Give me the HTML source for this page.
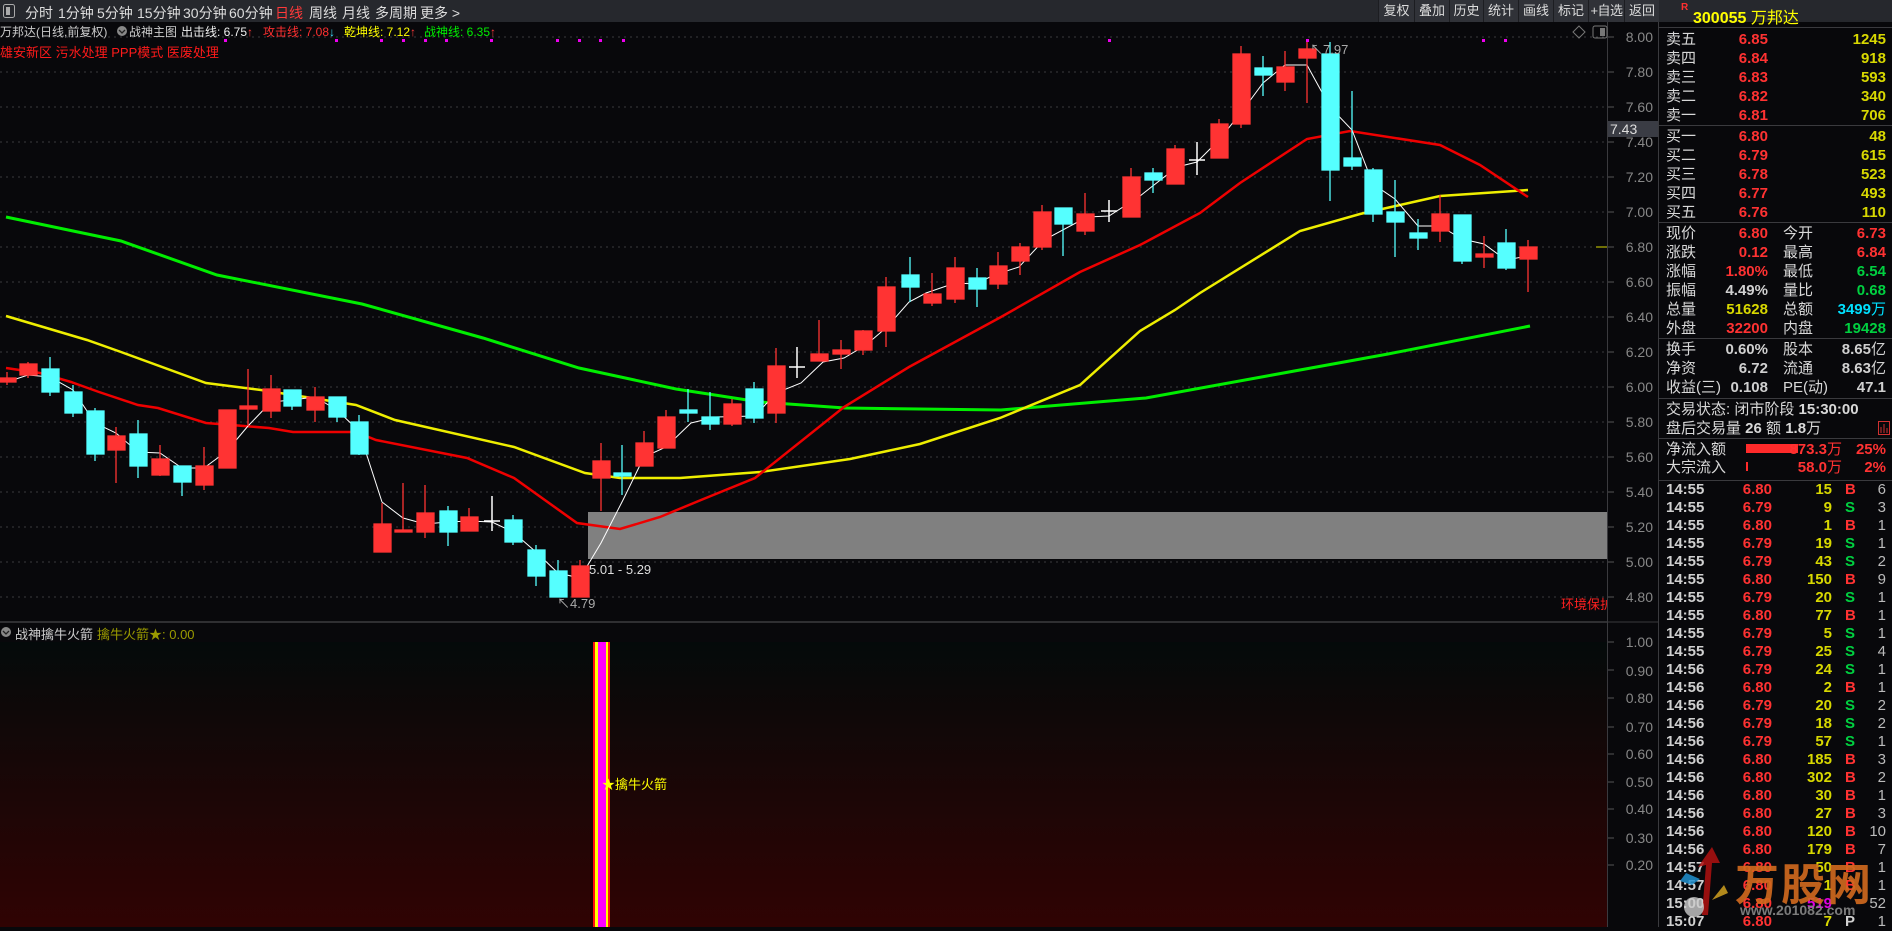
<!DOCTYPE html>
<html><head><meta charset="utf-8"><style>
*{margin:0;padding:0;box-sizing:border-box}
body{width:1892px;height:927px;background:#08080b;overflow:hidden;position:relative;font-family:"Liberation Sans","Noto Sans CJK SC",sans-serif;color:#ccc}
.a{position:absolute;white-space:nowrap}
#tb{position:absolute;left:0;top:0;width:1892px;height:22px;background:#26282d}
#tb span.t{position:absolute;top:3px;font-size:14px;color:#ddd}
.btn{position:absolute;top:0;height:22px;background:#303238;color:#ddd;font-size:13px;line-height:22px;text-align:center;border-left:1px solid #1c1d21;overflow:hidden}
.r{position:absolute;left:1659px;width:233px;height:19px;font-size:15px;line-height:19px}
.r span{position:absolute;top:0}
.l{left:7px;color:#d8d8d8}
.v{right:124px;font-weight:bold}
.l2{left:124px;color:#d8d8d8}
.v2{right:6px;font-weight:bold}
.tk{position:absolute;left:1659px;width:233px;height:18px;font-size:15px;line-height:18px;font-weight:bold}
.tk span{position:absolute;top:0}
.ti{left:7px;color:#d0d0d0}.pr{right:120px;color:#ff3232}.vo{right:60px;color:#d8d800}.bs{left:186px}.n{right:6px;color:#bbb;font-weight:normal}
.R{color:#ff3232}.Y{color:#d8d800}.G{color:#00d040}.C{color:#00e0ff}.W{color:#d0d0d0}
.hl{position:absolute;left:1659px;width:233px;height:1px;background:#3a3a3e}
.ax{position:absolute;right:239px;font-size:14px;color:#888;text-align:right}
.h2{position:absolute;top:24px;font-size:12px;line-height:16px;white-space:nowrap}
</style></head><body>

<svg class="a" style="left:0;top:0" width="1892" height="927" xmlns="http://www.w3.org/2000/svg">
<defs><linearGradient id="g" x1="0" y1="0" x2="0" y2="1"><stop offset="0" stop-color="#040a0a"/><stop offset="1" stop-color="#300303"/></linearGradient></defs>
<rect x="0" y="642" width="1607" height="285" fill="url(#g)"/>
<line x1="0" y1="622" x2="1607" y2="622" stroke="#3c3c40" stroke-width="1.5"/>
<line x1="1607.5" y1="22" x2="1607.5" y2="927" stroke="#3a3a3e"/>
<line x1="1658.5" y1="0" x2="1658.5" y2="927" stroke="#3a3a3e"/>
<line x1="1608" y1="622" x2="1658" y2="622" stroke="#3a3a3e"/>
<g stroke="#3a3a3e" stroke-dasharray="2,4">
<line x1="0" y1="37" x2="1607" y2="37"/><line x1="0" y1="72" x2="1607" y2="72"/><line x1="0" y1="107" x2="1607" y2="107"/><line x1="0" y1="142" x2="1607" y2="142"/><line x1="0" y1="177" x2="1607" y2="177"/><line x1="0" y1="212" x2="1607" y2="212"/><line x1="0" y1="247" x2="1607" y2="247"/><line x1="0" y1="282" x2="1607" y2="282"/><line x1="0" y1="317" x2="1607" y2="317"/><line x1="0" y1="352" x2="1607" y2="352"/><line x1="0" y1="387" x2="1607" y2="387"/><line x1="0" y1="422" x2="1607" y2="422"/><line x1="0" y1="457" x2="1607" y2="457"/><line x1="0" y1="492" x2="1607" y2="492"/><line x1="0" y1="527" x2="1607" y2="527"/><line x1="0" y1="562" x2="1607" y2="562"/><line x1="0" y1="597" x2="1607" y2="597"/>
</g>
<g stroke="#555">
<line x1="1608" y1="37" x2="1614" y2="37"/><line x1="1608" y1="72" x2="1614" y2="72"/><line x1="1608" y1="107" x2="1614" y2="107"/><line x1="1608" y1="142" x2="1614" y2="142"/><line x1="1608" y1="177" x2="1614" y2="177"/><line x1="1608" y1="212" x2="1614" y2="212"/><line x1="1608" y1="247" x2="1614" y2="247"/><line x1="1608" y1="282" x2="1614" y2="282"/><line x1="1608" y1="317" x2="1614" y2="317"/><line x1="1608" y1="352" x2="1614" y2="352"/><line x1="1608" y1="387" x2="1614" y2="387"/><line x1="1608" y1="422" x2="1614" y2="422"/><line x1="1608" y1="457" x2="1614" y2="457"/><line x1="1608" y1="492" x2="1614" y2="492"/><line x1="1608" y1="527" x2="1614" y2="527"/><line x1="1608" y1="562" x2="1614" y2="562"/><line x1="1608" y1="597" x2="1614" y2="597"/>
<line x1="1608" y1="642" x2="1614" y2="642"/><line x1="1608" y1="670" x2="1614" y2="670"/><line x1="1608" y1="698" x2="1614" y2="698"/><line x1="1608" y1="727" x2="1614" y2="727"/><line x1="1608" y1="754" x2="1614" y2="754"/><line x1="1608" y1="782" x2="1614" y2="782"/><line x1="1608" y1="809" x2="1614" y2="809"/><line x1="1608" y1="838" x2="1614" y2="838"/><line x1="1608" y1="865" x2="1614" y2="865"/>
</g>
<line x1="1596" y1="247" x2="1607" y2="247" stroke="#d8d800"/>
<rect x="588" y="512" width="1019" height="47" fill="#808080"/>
<polyline fill="none" stroke="#00ee00" stroke-width="3" points="6,217 121,241 217,275 362,304 483,338 579,368 676,389 760,402 845,408 1001,410 1146,398 1267,376 1388,354 1530,326"/>
<polyline fill="none" stroke="#eeee00" stroke-width="2.5" points="6,316 87,340 121,352 206,383 261,390 356,405 395,420 514,447 585,473 620,478 680,478 760,472 850,459 920,444 1000,418 1080,385 1140,331 1175,310 1200,293 1300,231 1360,214 1440,196 1528,190"/>
<polyline fill="none" stroke="#ee0000" stroke-width="2.5" points="6,368 40,373 71,382 99,392 138,405 158,408 206,423 269,428 293,432 356,432 376,440 467,458 514,478 577,523 620,529 660,517 701,500 755,478 844,407 909,367 1001,317 1080,272 1140,245 1200,213 1240,183 1307,139 1350,131 1440,145 1480,165 1528,197"/>
<polyline fill="none" stroke="#ffffff" stroke-width="1" points="7,382 28,375 50,377 73,390 95,423 116,433 138,452 160,453 182,468 204,468 227,451 248,426 271,402 292,400 315,397 337,410 359,431 382,502 403,518 425,524 448,522 469,521 492,522 513,532 536,552 558,573 580,578 601,543 623,500 644,457 666,447 691,423 716,417 755,416 776,393 801,383 823,362 844,358 866,345 887,327 909,302 926,293 955,283 976,284 994,275 1019,267 1044,240 1087,217 1109,216 1140,196 1177,167 1197,162 1219,140 1243,110 1263,83 1285,65 1307,65 1330,107 1352,130 1373,184 1395,199 1418,226 1440,226 1462,239 1484,244 1506,260 1528,256"/>
<g stroke-width="1.3">
<g stroke="#ff3333" fill="#ff3333">
<line x1="7" y1="372" x2="7" y2="385"/><rect x="-1" y="378" width="17" height="4"/>
<line x1="28" y1="362" x2="28" y2="378"/><rect x="20" y="364" width="17" height="11"/>
<line x1="116" y1="427" x2="116" y2="483"/><rect x="108" y="436" width="17" height="14"/>
<line x1="160" y1="445" x2="160" y2="476"/><rect x="152" y="459" width="17" height="16"/>
<line x1="204" y1="447" x2="204" y2="490"/><rect x="196" y="466" width="17" height="19"/>
<line x1="227" y1="410" x2="227" y2="468"/><rect x="219" y="410" width="17" height="58"/>
<line x1="248" y1="369" x2="248" y2="426"/><rect x="240" y="406" width="17" height="3"/>
<line x1="271" y1="375" x2="271" y2="418"/><rect x="263" y="389" width="17" height="22"/>
<line x1="315" y1="387" x2="315" y2="422"/><rect x="307" y="397" width="17" height="13"/>
<line x1="382" y1="503" x2="382" y2="552"/><rect x="374" y="524" width="17" height="28"/>
<line x1="403" y1="483" x2="403" y2="532"/><rect x="395" y="530" width="17" height="2"/>
<line x1="425" y1="485" x2="425" y2="538"/><rect x="417" y="513" width="17" height="19"/>
<line x1="469" y1="508" x2="469" y2="531"/><rect x="461" y="517" width="17" height="14"/>
<line x1="580" y1="560" x2="580" y2="597"/><rect x="572" y="566" width="17" height="31"/>
<line x1="601" y1="443" x2="601" y2="511"/><rect x="593" y="461" width="17" height="17"/>
<line x1="644" y1="431" x2="644" y2="466"/><rect x="636" y="443" width="17" height="23"/>
<line x1="666" y1="410" x2="666" y2="448"/><rect x="658" y="417" width="17" height="31"/>
<line x1="732" y1="399" x2="732" y2="426"/><rect x="724" y="404" width="17" height="20"/>
<line x1="776" y1="348" x2="776" y2="423"/><rect x="768" y="366" width="17" height="47"/>
<line x1="819" y1="320" x2="819" y2="361"/><rect x="811" y="354" width="17" height="7"/>
<line x1="841" y1="340" x2="841" y2="369"/><rect x="833" y="350" width="17" height="4"/>
<line x1="863" y1="330" x2="863" y2="355"/><rect x="855" y="331" width="17" height="19"/>
<line x1="886" y1="277" x2="886" y2="347"/><rect x="878" y="287" width="17" height="44"/>
<line x1="932" y1="273" x2="932" y2="306"/><rect x="924" y="294" width="17" height="9"/>
<line x1="955" y1="257" x2="955" y2="303"/><rect x="947" y="268" width="17" height="31"/>
<line x1="998" y1="252" x2="998" y2="289"/><rect x="990" y="266" width="17" height="18"/>
<line x1="1020" y1="243" x2="1020" y2="275"/><rect x="1012" y="247" width="17" height="14"/>
<line x1="1042" y1="205" x2="1042" y2="250"/><rect x="1034" y="212" width="17" height="35"/>
<line x1="1085" y1="193" x2="1085" y2="235"/><rect x="1077" y="214" width="17" height="17"/>
<line x1="1131" y1="168" x2="1131" y2="217"/><rect x="1123" y="177" width="17" height="40"/>
<line x1="1175" y1="145" x2="1175" y2="184"/><rect x="1167" y="149" width="17" height="35"/>
<line x1="1219" y1="119" x2="1219" y2="158"/><rect x="1211" y="124" width="17" height="34"/>
<line x1="1241" y1="46" x2="1241" y2="128"/><rect x="1233" y="54" width="17" height="70"/>
<line x1="1285" y1="51" x2="1285" y2="91"/><rect x="1277" y="67" width="17" height="15"/>
<line x1="1307" y1="40" x2="1307" y2="103"/><rect x="1299" y="49" width="17" height="9"/>
<line x1="1440" y1="195" x2="1440" y2="242"/><rect x="1432" y="214" width="17" height="17"/>
<line x1="1484" y1="236" x2="1484" y2="268"/><rect x="1476" y="254" width="17" height="3"/>
<line x1="1528" y1="240" x2="1528" y2="292"/><rect x="1520" y="247" width="17" height="12"/>
</g>
<g stroke="#55ffff" fill="#55ffff">
<line x1="50" y1="357" x2="50" y2="396"/><rect x="42" y="369" width="17" height="23"/>
<line x1="73" y1="385" x2="73" y2="417"/><rect x="65" y="392" width="17" height="21"/>
<line x1="95" y1="408" x2="95" y2="461"/><rect x="87" y="411" width="17" height="43"/>
<line x1="138" y1="420" x2="138" y2="478"/><rect x="130" y="434" width="17" height="32"/>
<line x1="182" y1="466" x2="182" y2="496"/><rect x="174" y="466" width="17" height="16"/>
<line x1="292" y1="390" x2="292" y2="410"/><rect x="284" y="390" width="17" height="16"/>
<line x1="337" y1="397" x2="337" y2="422"/><rect x="329" y="397" width="17" height="20"/>
<line x1="359" y1="415" x2="359" y2="455"/><rect x="351" y="422" width="17" height="32"/>
<line x1="448" y1="506" x2="448" y2="546"/><rect x="440" y="511" width="17" height="21"/>
<line x1="513" y1="515" x2="513" y2="545"/><rect x="505" y="520" width="17" height="22"/>
<line x1="536" y1="545" x2="536" y2="586"/><rect x="528" y="550" width="17" height="26"/>
<line x1="558" y1="560" x2="558" y2="597"/><rect x="550" y="571" width="17" height="26"/>
<line x1="622" y1="445" x2="622" y2="495"/><rect x="614" y="473" width="17" height="3"/>
<line x1="688" y1="389" x2="688" y2="422"/><rect x="680" y="410" width="17" height="3"/>
<line x1="710" y1="392" x2="710" y2="430"/><rect x="702" y="417" width="17" height="7"/>
<line x1="754" y1="382" x2="754" y2="423"/><rect x="746" y="389" width="17" height="29"/>
<line x1="910" y1="257" x2="910" y2="302"/><rect x="902" y="275" width="17" height="12"/>
<line x1="977" y1="268" x2="977" y2="307"/><rect x="969" y="278" width="17" height="11"/>
<line x1="1063" y1="208" x2="1063" y2="256"/><rect x="1055" y="208" width="17" height="16"/>
<line x1="1153" y1="168" x2="1153" y2="193"/><rect x="1145" y="173" width="17" height="7"/>
<line x1="1263" y1="56" x2="1263" y2="96"/><rect x="1255" y="68" width="17" height="7"/>
<line x1="1330" y1="42" x2="1330" y2="201"/><rect x="1322" y="54" width="17" height="116"/>
<line x1="1352" y1="91" x2="1352" y2="170"/><rect x="1344" y="158" width="17" height="8"/>
<line x1="1373" y1="168" x2="1373" y2="222"/><rect x="1365" y="170" width="17" height="44"/>
<line x1="1395" y1="180" x2="1395" y2="257"/><rect x="1387" y="212" width="17" height="10"/>
<line x1="1418" y1="219" x2="1418" y2="250"/><rect x="1410" y="233" width="17" height="5"/>
<line x1="1462" y1="215" x2="1462" y2="264"/><rect x="1454" y="215" width="17" height="46"/>
<line x1="1506" y1="229" x2="1506" y2="270"/><rect x="1498" y="243" width="17" height="25"/>
</g>
<g stroke="#ffffff" stroke-width="1.5">
<line x1="492" y1="496" x2="492" y2="531"/><line x1="484" y1="521" x2="500" y2="521"/>
<line x1="797" y1="347" x2="797" y2="378"/><line x1="789" y1="367" x2="805" y2="367"/>
<line x1="1109" y1="200" x2="1109" y2="222"/><line x1="1101" y1="211" x2="1117" y2="211"/>
<line x1="1197" y1="142" x2="1197" y2="175"/><line x1="1189" y1="160" x2="1205" y2="160"/>
</g>
</g>
<g fill="#ee00ee">
<rect x="224" y="39" width="3" height="3"/><rect x="335" y="39" width="3" height="3"/><rect x="380" y="39" width="3" height="3"/><rect x="402" y="39" width="3" height="3"/><rect x="424" y="39" width="3" height="3"/><rect x="445" y="39" width="3" height="3"/><rect x="490" y="39" width="3" height="3"/><rect x="556" y="39" width="3" height="3"/><rect x="578" y="39" width="3" height="3"/><rect x="599" y="39" width="3" height="3"/><rect x="622" y="39" width="3" height="3"/><rect x="1108" y="39" width="3" height="3"/><rect x="1306" y="39" width="3" height="3"/><rect x="1482" y="39" width="3" height="3"/><rect x="1504" y="39" width="3" height="3"/>
</g>
<polygon points="1579,26 1585,32 1579,38 1573,32" fill="none" stroke="#777"/>
<rect x="1593" y="26" width="14" height="12" rx="2" fill="none" stroke="#777"/><rect x="1600" y="28" width="5" height="8" fill="#777"/>
<rect x="593" y="642" width="17" height="285" fill="#ff1010"/>
<rect x="595" y="642" width="13" height="285" fill="#ffff00"/>
<rect x="598" y="642" width="8" height="285" fill="#ff00ff"/>
<circle cx="6" cy="632" r="5" fill="#888"/><path d="M3,631 L6,634 L9,631" stroke="#222" fill="none" stroke-width="1.3"/>
<circle cx="122" cy="31" r="5" fill="#888"/><path d="M119,30 L122,33 L125,30" stroke="#222" fill="none" stroke-width="1.3"/>
</svg>

<div id="tb">
<svg class="a" style="left:3px;top:4px" width="12" height="14"><rect x="0.5" y="0.5" width="11" height="13" rx="2" fill="none" stroke="#aaa"/><rect x="3" y="3" width="4" height="8" fill="#aaa"/></svg>
<span class="t" style="left:25px">分时</span><span class="t" style="left:58px">1分钟</span><span class="t" style="left:97px">5分钟</span><span class="t" style="left:137px">15分钟</span><span class="t" style="left:183px">30分钟</span><span class="t" style="left:229px">60分钟</span><span class="t" style="left:275px;color:#ff3a3a">日线</span><span class="t" style="left:309px">周线</span><span class="t" style="left:342px">月线</span><span class="t" style="left:375px">多周期</span><span class="t" style="left:420px">更多 &gt;</span>
<div class="btn" style="left:1378px;width:36px">复权</div><div class="btn" style="left:1414px;width:35px">叠加</div><div class="btn" style="left:1449px;width:34px">历史</div><div class="btn" style="left:1483px;width:35px">统计</div><div class="btn" style="left:1518px;width:35px">画线</div><div class="btn" style="left:1553px;width:35px">标记</div><div class="btn" style="left:1588px;width:36px;letter-spacing:-0.5px">+自选</div><div class="btn" style="left:1624px;width:35px">返回</div>
</div>

<div class="h2" style="left:0;color:#ccc">万邦达(日线,前复权)</div>
<div class="h2" style="left:129px;color:#ccc">战神主图</div>
<div class="h2" style="left:181px;color:#eee">出击线: 6.75<b style="color:#ff3a3a">↑</b></div>
<div class="h2" style="left:263px;color:#ff3030">攻击线: 7.08<b style="color:#40e0ff">↓</b></div>
<div class="h2" style="left:344px;color:#ffff00">乾坤线: 7.12<b style="color:#ff3a3a">↑</b></div>
<div class="h2" style="left:424px;color:#00ee00">战神线: 6.35<b style="color:#ff3a3a">↑</b></div>
<div class="a" style="left:0;top:42px;font-size:13px;color:#ff1a1a">雄安新区 污水处理 PPP模式 医废处理</div>
<div class="a" style="left:1310px;top:39px;font-size:13px;color:#aaa">↖7.97</div>
<div class="a" style="left:589px;top:562px;font-size:13px;color:#ddd">5.01 - 5.29</div>
<div class="a" style="left:557px;top:593px;font-size:13px;color:#aaa">↖4.79</div>
<div class="a" style="left:1561px;top:594px;font-size:13px;color:#ff2020;width:46px;overflow:hidden">环境保护</div>
<div class="a" style="left:15px;top:624px;font-size:13px;color:#ccc">战神擒牛火箭</div>
<div class="a" style="left:97px;top:624px;font-size:13px;color:#9a9a00">擒牛火箭★: 0.00</div>
<div class="a" style="left:602px;top:774px;font-size:13px;color:#ffff00">★擒牛火箭</div>

<div class="ax" style="top:29px">8.00</div><div class="ax" style="top:64px">7.80</div><div class="ax" style="top:99px">7.60</div><div class="ax" style="top:134px">7.40</div><div class="ax" style="top:169px">7.20</div><div class="ax" style="top:204px">7.00</div><div class="ax" style="top:239px">6.80</div><div class="ax" style="top:274px">6.60</div><div class="ax" style="top:309px">6.40</div><div class="ax" style="top:344px">6.20</div><div class="ax" style="top:379px">6.00</div><div class="ax" style="top:414px">5.80</div><div class="ax" style="top:449px">5.60</div><div class="ax" style="top:484px">5.40</div><div class="ax" style="top:519px">5.20</div><div class="ax" style="top:554px">5.00</div><div class="ax" style="top:589px">4.80</div>
<div class="a" style="left:1608px;top:121px;width:50px;height:16px;background:#3a3c44;color:#ddd;font-size:14px;line-height:16px;padding-left:2px">7.43</div>
<div class="ax" style="top:634px">1.00</div><div class="ax" style="top:663px">0.90</div><div class="ax" style="top:690px">0.80</div><div class="ax" style="top:719px">0.70</div><div class="ax" style="top:746px">0.60</div><div class="ax" style="top:774px">0.50</div><div class="ax" style="top:801px">0.40</div><div class="ax" style="top:830px">0.30</div><div class="ax" style="top:857px">0.20</div>

<div class="a" style="left:1681px;top:2px;font-size:10px;font-weight:bold;color:#ff3030">R</div>
<div class="a" style="left:1693px;top:4px;font-size:16px;font-weight:bold;color:#ffff00">300055 <span style="font-weight:normal">万邦达</span></div>
<div class="hl" style="top:27px"></div>
<div class="r" style="top:30px"><span class="l">卖五</span><span class="v R">6.85</span><span class="v2 Y">1245</span></div>
<div class="r" style="top:49px"><span class="l">卖四</span><span class="v R">6.84</span><span class="v2 Y">918</span></div>
<div class="r" style="top:68px"><span class="l">卖三</span><span class="v R">6.83</span><span class="v2 Y">593</span></div>
<div class="r" style="top:87px"><span class="l">卖二</span><span class="v R">6.82</span><span class="v2 Y">340</span></div>
<div class="r" style="top:106px"><span class="l">卖一</span><span class="v R">6.81</span><span class="v2 Y">706</span></div>
<div class="hl" style="top:125px"></div>
<div class="r" style="top:127px"><span class="l">买一</span><span class="v R">6.80</span><span class="v2 Y">48</span></div>
<div class="r" style="top:146px"><span class="l">买二</span><span class="v R">6.79</span><span class="v2 Y">615</span></div>
<div class="r" style="top:165px"><span class="l">买三</span><span class="v R">6.78</span><span class="v2 Y">523</span></div>
<div class="r" style="top:184px"><span class="l">买四</span><span class="v R">6.77</span><span class="v2 Y">493</span></div>
<div class="r" style="top:203px"><span class="l">买五</span><span class="v R">6.76</span><span class="v2 Y">110</span></div>
<div class="hl" style="top:222px"></div>
<div class="r" style="top:224px"><span class="l">现价</span><span class="v R">6.80</span><span class="l2">今开</span><span class="v2 R">6.73</span></div>
<div class="r" style="top:243px"><span class="l">涨跌</span><span class="v R">0.12</span><span class="l2">最高</span><span class="v2 R">6.84</span></div>
<div class="r" style="top:262px"><span class="l">涨幅</span><span class="v R">1.80%</span><span class="l2">最低</span><span class="v2 G">6.54</span></div>
<div class="r" style="top:281px"><span class="l">振幅</span><span class="v W">4.49%</span><span class="l2">量比</span><span class="v2 G">0.68</span></div>
<div class="r" style="top:300px"><span class="l">总量</span><span class="v Y">51628</span><span class="l2">总额</span><span class="v2 C">3499<span style="position:static;font-weight:normal">万</span></span></div>
<div class="r" style="top:319px"><span class="l">外盘</span><span class="v R">32200</span><span class="l2">内盘</span><span class="v2 G">19428</span></div>
<div class="hl" style="top:338px"></div>
<div class="r" style="top:340px"><span class="l">换手</span><span class="v W">0.60%</span><span class="l2">股本</span><span class="v2 W">8.65<span style="position:static;font-weight:normal">亿</span></span></div>
<div class="r" style="top:359px"><span class="l">净资</span><span class="v W">6.72</span><span class="l2">流通</span><span class="v2 W">8.63<span style="position:static;font-weight:normal">亿</span></span></div>
<div class="r" style="top:378px"><span class="l">收益(三)</span><span class="v W">0.108</span><span class="l2">PE(动)</span><span class="v2 W">47.1</span></div>
<div class="hl" style="top:398px"></div>
<div class="r" style="top:400px"><span class="l">交易状态: 闭市阶段 <b>15:30:00</b></span></div>
<div class="r" style="top:419px"><span class="l">盘后交易量 <b>26</b> 额 <b>1.8</b>万</span></div>
<svg class="a" style="left:1878px;top:421px" width="12" height="14"><rect x="0.5" y="0.5" width="11" height="13" fill="none" stroke="#d03030"/><path d="M3,12V6M6,12V3M9,12V7" stroke="#d03030"/></svg>
<div class="hl" style="top:438px"></div>
<div class="a" style="left:1746px;top:444px;width:52px;height:9px;background:#ff2a2a"></div>
<div class="a" style="left:1746px;top:462px;width:2px;height:9px;background:#ff2a2a"></div>
<div class="r" style="top:440px"><span class="l">净流入额</span><span class="R" style="right:50px;font-weight:bold">873.3<span style="position:static;font-weight:normal">万</span></span><span class="v2 R">25%</span></div>
<div class="r" style="top:458px"><span class="l">大宗流入</span><span class="R" style="right:50px;font-weight:bold">58.0<span style="position:static;font-weight:normal">万</span></span><span class="v2 R">2%</span></div>
<div class="hl" style="top:480px"></div>

<div class="tk" style="top:481px"><span class="ti">14:55</span><span class="pr">6.80</span><span class="vo">15</span><span class="bs R">B</span><span class="n">6</span></div>
<div class="tk" style="top:499px"><span class="ti">14:55</span><span class="pr">6.79</span><span class="vo">9</span><span class="bs G">S</span><span class="n">3</span></div>
<div class="tk" style="top:517px"><span class="ti">14:55</span><span class="pr">6.80</span><span class="vo">1</span><span class="bs R">B</span><span class="n">1</span></div>
<div class="tk" style="top:535px"><span class="ti">14:55</span><span class="pr">6.79</span><span class="vo">19</span><span class="bs G">S</span><span class="n">1</span></div>
<div class="tk" style="top:553px"><span class="ti">14:55</span><span class="pr">6.79</span><span class="vo">43</span><span class="bs G">S</span><span class="n">2</span></div>
<div class="tk" style="top:571px"><span class="ti">14:55</span><span class="pr">6.80</span><span class="vo">150</span><span class="bs R">B</span><span class="n">9</span></div>
<div class="tk" style="top:589px"><span class="ti">14:55</span><span class="pr">6.79</span><span class="vo">20</span><span class="bs G">S</span><span class="n">1</span></div>
<div class="tk" style="top:607px"><span class="ti">14:55</span><span class="pr">6.80</span><span class="vo">77</span><span class="bs R">B</span><span class="n">1</span></div>
<div class="tk" style="top:625px"><span class="ti">14:55</span><span class="pr">6.79</span><span class="vo">5</span><span class="bs G">S</span><span class="n">1</span></div>
<div class="tk" style="top:643px"><span class="ti">14:55</span><span class="pr">6.79</span><span class="vo">25</span><span class="bs G">S</span><span class="n">4</span></div>
<div class="tk" style="top:661px"><span class="ti">14:56</span><span class="pr">6.79</span><span class="vo">24</span><span class="bs G">S</span><span class="n">1</span></div>
<div class="tk" style="top:679px"><span class="ti">14:56</span><span class="pr">6.80</span><span class="vo">2</span><span class="bs R">B</span><span class="n">1</span></div>
<div class="tk" style="top:697px"><span class="ti">14:56</span><span class="pr">6.79</span><span class="vo">20</span><span class="bs G">S</span><span class="n">2</span></div>
<div class="tk" style="top:715px"><span class="ti">14:56</span><span class="pr">6.79</span><span class="vo">18</span><span class="bs G">S</span><span class="n">2</span></div>
<div class="tk" style="top:733px"><span class="ti">14:56</span><span class="pr">6.79</span><span class="vo">57</span><span class="bs G">S</span><span class="n">1</span></div>
<div class="tk" style="top:751px"><span class="ti">14:56</span><span class="pr">6.80</span><span class="vo">185</span><span class="bs R">B</span><span class="n">3</span></div>
<div class="tk" style="top:769px"><span class="ti">14:56</span><span class="pr">6.80</span><span class="vo">302</span><span class="bs R">B</span><span class="n">2</span></div>
<div class="tk" style="top:787px"><span class="ti">14:56</span><span class="pr">6.80</span><span class="vo">30</span><span class="bs R">B</span><span class="n">1</span></div>
<div class="tk" style="top:805px"><span class="ti">14:56</span><span class="pr">6.80</span><span class="vo">27</span><span class="bs R">B</span><span class="n">3</span></div>
<div class="tk" style="top:823px"><span class="ti">14:56</span><span class="pr">6.80</span><span class="vo">120</span><span class="bs R">B</span><span class="n">10</span></div>
<div class="tk" style="top:841px"><span class="ti">14:56</span><span class="pr">6.80</span><span class="vo">179</span><span class="bs R">B</span><span class="n">7</span></div>
<div class="tk" style="top:859px"><span class="ti">14:57</span><span class="pr">6.80</span><span class="vo">50</span><span class="bs R">B</span><span class="n">1</span></div>
<div class="tk" style="top:877px"><span class="ti">14:57</span><span class="pr">6.80</span><span class="vo">1</span><span class="bs R">B</span><span class="n">1</span></div>
<div class="tk" style="top:895px"><span class="ti">15:00</span><span class="pr">6.80</span><span class="vo" style="color:#e000e0">519</span><span class="n">52</span></div>
<div class="tk" style="top:913px"><span class="ti">15:07</span><span class="pr">6.80</span><span class="vo">7</span><span class="bs W">P</span><span class="n">1</span></div>

<svg class="a" style="left:1672px;top:845px" width="60" height="80"><path d="M30,70 L34,20 L26,22 L40,2 L48,18 L40,18 L36,70Z" fill="#b01010" opacity="0.85"/><path d="M20,40 L8,36 L14,28 L28,34Z" fill="#2090d0" opacity="0.85"/><path d="M40,55 L52,40 L56,48Z" fill="#d0a020" opacity="0.85"/><circle cx="22" cy="62" r="10" fill="#ccc" opacity="0.8"/></svg>
<div class="a" style="left:1735px;top:856px;font-size:44px;font-weight:bold;color:#d26a1e;opacity:0.9;letter-spacing:2px;font-family:'Noto Sans CJK SC',sans-serif;line-height:50px">万股网</div>
<div class="a" style="left:1740px;top:902px;font-size:14px;font-weight:bold;color:#888;opacity:0.9">www.201082.com</div>
</body></html>
